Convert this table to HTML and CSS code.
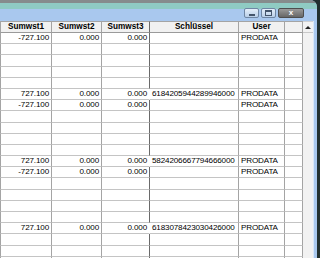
FILE: index.html
```html
<!DOCTYPE html>
<html>
<head>
<meta charset="utf-8">
<link rel="stylesheet" href="styles.css">
</head>
<body>
<div class="screen">
  <div class="window">
    <div class="title">
      <div class="btns">
        <div class="btn min"><span class="g-min"></span></div>
        <div class="btn max"><span class="g-max"></span></div>
        <div class="btn close">x</div>
      </div>
    </div>
    <div class="client">
      <div class="grid">
        <div class="h">Sumwst1</div><div class="h">Sumwst2</div><div class="h c3">Sumwst3</div><div class="h">Schlüssel</div><div class="h">User</div><div class="h"></div>

        <div class="n">-727.100</div><div class="n">0.000</div><div class="n c3">0.000</div><div class="t"></div><div class="t">PRODATA</div><div></div>
        <div></div><div></div><div class="c3"></div><div></div><div></div><div></div>
        <div></div><div></div><div class="c3"></div><div></div><div></div><div></div>
        <div></div><div></div><div class="c3"></div><div></div><div></div><div></div>
        <div></div><div></div><div class="c3"></div><div></div><div></div><div></div>

        <div class="n">727.100</div><div class="n">0.000</div><div class="n c3 join">0.000</div><div class="t">6184205944289946000</div><div class="t">PRODATA</div><div></div>
        <div class="n">-727.100</div><div class="n">0.000</div><div class="n c3">0.000</div><div class="t"></div><div class="t">PRODATA</div><div></div>
        <div></div><div></div><div class="c3"></div><div></div><div></div><div></div>
        <div></div><div></div><div class="c3"></div><div></div><div></div><div></div>
        <div></div><div></div><div class="c3"></div><div></div><div></div><div></div>
        <div></div><div></div><div class="c3"></div><div></div><div></div><div></div>

        <div class="n">727.100</div><div class="n">0.000</div><div class="n c3 join">0.000</div><div class="t">5824206667794666000</div><div class="t">PRODATA</div><div></div>
        <div class="n">-727.100</div><div class="n">0.000</div><div class="n c3">0.000</div><div class="t"></div><div class="t">PRODATA</div><div></div>
        <div></div><div></div><div class="c3"></div><div></div><div></div><div></div>
        <div></div><div></div><div class="c3"></div><div></div><div></div><div></div>
        <div></div><div></div><div class="c3"></div><div></div><div></div><div></div>
        <div></div><div></div><div class="c3"></div><div></div><div></div><div></div>

        <div class="n">727.100</div><div class="n">0.000</div><div class="n c3 join">0.000</div><div class="t">6183078423030426000</div><div class="t">PRODATA</div><div></div>
        <div></div><div></div><div class="c3"></div><div></div><div></div><div></div>
        <div></div><div></div><div class="c3"></div><div></div><div></div><div></div>
        <div></div><div></div><div class="c3"></div><div></div><div></div><div></div>
      </div>
      <div class="scroll">
        <div class="up"><span class="tri"></span></div>
      </div>
      <div class="frame"></div>
    </div>
  </div>
</div>
</body>
</html>
```

FILE: styles.css
```css
html, body {
  margin: 0;
  padding: 0;
  background: #22302f;
}
.screen {
  width: 320px;
  height: 258px;
  overflow: hidden;
  background: #22302f;
  font-family: "Liberation Sans", Arial, sans-serif;
  color: #000;
}
.window {
  width: 317px;
  height: 258px;
  display: flex;
  flex-direction: column;
  border-top-right-radius: 7px;
  overflow: hidden;
  background: #a9c8ee;
}
.title {
  height: 21px;
  flex: none;
  background: linear-gradient(to bottom, #868c8c 0, #868c8c 3px, #8fcbc3 3px, #8fcbc3 9px, #a9c8ee 9px, #a9c8ee 21px);
  display: flex;
  justify-content: flex-end;
  align-items: flex-start;
  padding-right: 13px;
  padding-top: 8px;
  box-sizing: border-box;
}
.btns {
  display: flex;
  gap: 2px;
}
.btn {
  height: 10px;
  box-sizing: border-box;
  border: 1px solid #6f86a3;
  border-radius: 2px;
  display: flex;
  align-items: center;
  justify-content: center;
}
.min, .max {
  width: 15px;
  background: linear-gradient(to bottom, #e4eef9, #b9cfe8);
}
.close {
  width: 26px;
  background: linear-gradient(to bottom, #9a9a9a, #676767);
  border-color: #4e4e4e;
  color: #fff;
  font-size: 8px;
  font-weight: bold;
  line-height: 8px;
}
.g-min {
  width: 6px;
  height: 2px;
  background: #44556b;
  margin-top: 3px;
}
.g-max {
  width: 5px;
  height: 3px;
  border: 1px solid #44556b;
  border-top-width: 2px;
}
.client {
  flex: 1;
  display: flex;
  min-height: 0;
}
.grid {
  width: 303px;
  flex: none;
  display: grid;
  grid-template-columns: 52px 50px 48px 89px 46px 18px;
  grid-template-rows: 12px;
  grid-auto-rows: 11.2px;
  background: #fff;
  font-size: 8.1px;
  letter-spacing: -0.15px;
  align-content: start;
}
.grid > div {
  box-sizing: border-box;
  border-right: 1px solid #a4a4a4;
  border-bottom: 1px solid #c4c4c4;
  white-space: nowrap;
  overflow: hidden;
  line-height: 10px;
}
.grid > div:nth-child(6n+1) {
  border-left: 1px solid #a4a4a4;
}
.grid > .c3 {
  border-right-color: #6a6a6a;
}
.grid > .join {
  border-right-color: #fff;
}
.grid > .h {
  background: #f1f1f1;
  border-top: 1px solid #a4a4a4;
  border-bottom: 1px solid #9a9a9a;
  font-weight: bold;
  text-align: center;
  font-size: 8.2px;
  letter-spacing: 0;
  line-height: 10px;
}
.n {
  text-align: right;
  padding-right: 2px;
}
.t {
  padding-left: 2px;
}
.scroll {
  width: 10px;
  flex: none;
  background: #f2f2f2;
}
.up {
  height: 12px;
  box-sizing: border-box;
  border-top: 1px solid #d0d0d0;
  border-bottom: 1px solid #c8c8c8;
  display: flex;
  align-items: center;
  justify-content: center;
}
.tri {
  width: 0;
  height: 0;
  border-left: 3px solid transparent;
  border-right: 3px solid transparent;
  border-bottom: 3px solid #222;
}
.frame {
  width: 4px;
  flex: none;
  background: #a9c8ee;
  border-left: 1px solid #d9e8f8;
  box-sizing: border-box;
}
```
